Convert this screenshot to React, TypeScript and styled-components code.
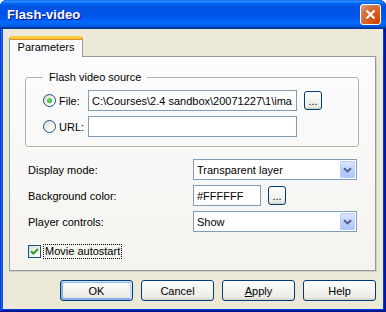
import React from 'react';
import styled, { createGlobalStyle } from 'styled-components';

const GlobalStyle = createGlobalStyle`
  html, body {
    margin: 0;
    padding: 0;
    background: #ffffff;
  }
  body {
    font-family: 'Liberation Sans', Arial, sans-serif;
    font-size: 11px;
    color: #000000;
  }
`;

const Window = styled.div`
  width: 386px;
  height: 312px;
  box-sizing: border-box;
  display: flex;
  flex-direction: column;
  border-radius: 7px 7px 0 0;
  overflow: hidden;
  background: #0054e3;
  box-shadow: inset -1px -1px #00138c, inset 1px 1px #0831d9,
    inset -2px -2px #001ea0, inset 2px 2px #166aee,
    inset -3px -3px #003bda, inset 3px 3px #0855dd;
`;

const TitleBar = styled.div`
  height: 29px;
  flex: none;
  display: flex;
  align-items: center;
  justify-content: space-between;
  padding: 0 5px 0 7px;
  background: linear-gradient(180deg, #0058ee 0%, #3593ff 4%, #288eff 6%,
    #127dff 8%, #036ffc 10%, #0262ee 14%, #0057e5 20%, #0054e3 24%,
    #0055eb 56%, #005bf5 66%, #026afe 76%, #0062ef 86%, #0052d6 92%,
    #0040ab 94%, #003092 100%);
`;

const Title = styled.span`
  font-family: 'Liberation Sans', Arial, sans-serif;
  font-weight: bold;
  font-size: 13px;
  color: #ffffff;
  text-shadow: 1px 1px #0f1089;
  letter-spacing: 0.1px;
`;

const CloseButton = styled.div`
  width: 21px;
  height: 21px;
  box-sizing: border-box;
  border: 1px solid #ffffff;
  border-radius: 3px;
  background: radial-gradient(circle at 90% 90%, #cc4600 0%, #dc6527 55%, #cd7546 68%, #e5a08a 100%);
  display: flex;
  align-items: center;
  justify-content: center;
  margin-top: -1px;
`;

const Body = styled.div`
  flex: 1;
  margin: 0 3px 3px;
  background: #ece9d8;
  display: flex;
  flex-direction: column;
  padding: 7px 7px 8px 6px;
`;

const TabStrip = styled.div`
  display: flex;
  height: 20px;
  position: relative;
  z-index: 1;
`;

const Tab = styled.div<{ $active?: boolean }>`
  width: 74px;
  height: 21px;
  box-sizing: border-box;
  border: 1px solid #919b9c;
  border-top: 3px solid #ffc83c;
  border-bottom: none;
  border-radius: 3px 3px 0 0;
  background: ${p => (p.$active ? '#fcfcfe' : '#f0f0ea')};
  display: flex;
  align-items: center;
  justify-content: center;
  padding-bottom: 2px;
  box-shadow: inset 0 1px #e68b2c;
`;

const Panel = styled.div`
  flex: 1;
  border: 1px solid #919b9c;
  box-shadow: 1px 1px #d0cebf;
  background: linear-gradient(180deg, #fcfcfe, #f4f3ee);
  padding: 14px 16px 0 15px;
  display: flex;
  flex-direction: column;
`;

const GroupBox = styled.fieldset`
  margin: 0;
  border: 1px solid #b5b2a6;
  border-radius: 3px;
  padding: 6px 0 9px 17px;
  display: flex;
  flex-direction: column;
  gap: 5px;
`;

const Legend = styled.legend`
  padding: 0 6px;
  line-height: 13px;
`;

const SourceRow = styled.div`
  display: flex;
  align-items: center;
  height: 21px;
`;

const RadioLabel = styled.label`
  width: 45px;
  flex: none;
  display: flex;
  align-items: center;
  gap: 3px;
`;

const Radio = styled.span<{ $checked?: boolean }>`
  width: 13px;
  height: 13px;
  box-sizing: border-box;
  border-radius: 50%;
  border: 1px solid #1c5180;
  background: linear-gradient(135deg, #dcd9d0 0%, #ffffff 80%);
  display: flex;
  align-items: center;
  justify-content: center;
  &::after {
    content: '';
    display: ${p => (p.$checked ? 'block' : 'none')};
    width: 5px;
    height: 5px;
    border-radius: 50%;
    background: radial-gradient(circle at 35% 35%, #6fe06a, #21a121);
  }
`;

const TextBox = styled.div<{ $width: number }>`
  width: ${p => p.$width}px;
  height: 21px;
  box-sizing: border-box;
  border: 1px solid #7f9db9;
  background: #ffffff;
  padding: 0 3px;
  display: flex;
  align-items: center;
  white-space: nowrap;
  overflow: hidden;
  flex: none;
`;

const BrowseButton = styled.div`
  width: 18px;
  height: 19px;
  box-sizing: border-box;
  margin-left: 7px;
  border: 1px solid #003c74;
  border-radius: 3px;
  background: linear-gradient(180deg, #ffffff, #ecebe6 86%, #d6d0c5);
  display: flex;
  align-items: flex-end;
  justify-content: center;
  padding-bottom: 3px;
  line-height: 9px;
  flex: none;
`;

const FieldList = styled.div`
  margin-top: 12px;
  padding-left: 3px;
  display: flex;
  flex-direction: column;
  gap: 5px;
`;

const FieldRow = styled.div`
  display: flex;
  align-items: center;
  height: 21px;
`;

const FieldLabel = styled.span`
  width: 165px;
  flex: none;
`;

const Select = styled.div`
  width: 164px;
  height: 21px;
  box-sizing: border-box;
  border: 1px solid #7f9db9;
  background: #ffffff;
  display: flex;
  align-items: center;
  justify-content: space-between;
  padding: 1px 1px 1px 3px;
`;

const DropArrow = styled.div`
  width: 15px;
  height: 17px;
  box-sizing: border-box;
  border: 1px solid #b9cdf8;
  border-radius: 1px;
  background: linear-gradient(180deg, #dbe6fe, #b9cefc 60%, #aec5fb);
  display: flex;
  align-items: center;
  justify-content: center;
`;

const CheckRow = styled.div`
  margin: 12px 0 0 3px;
  display: flex;
  align-items: center;
  gap: 2px;
`;

const CheckBox = styled.span`
  width: 13px;
  height: 13px;
  box-sizing: border-box;
  border: 1px solid #1c5180;
  background: linear-gradient(135deg, #dcdcd7, #ffffff);
  display: flex;
  align-items: center;
  justify-content: center;
`;

const FocusLabel = styled.span`
  border: 1px dotted #000000;
  padding: 0 1px;
  line-height: 13px;
`;

const ButtonRow = styled.div`
  margin-top: 9px;
  display: flex;
  justify-content: flex-end;
  gap: 8px;
`;

const Button = styled.div<{ $default?: boolean }>`
  width: 73px;
  height: 21px;
  box-sizing: border-box;
  border: 1px solid #003c74;
  border-radius: 3px;
  background: linear-gradient(180deg, #ffffff, #ecebe6 86%, #d6d0c5);
  display: flex;
  align-items: center;
  justify-content: center;
  box-shadow: ${p =>
    p.$default
      ? 'inset -1px 1px #cee7ff, inset 1px 2px #98b8ea, inset -2px 2px #bcd4f6, inset 1px -1px #89ade4, inset 2px -2px #89ade4'
      : 'none'};
`;

const Chevron = () => (
  <svg width="9" height="6" viewBox="0 0 9 6">
    <path d="M1 1.2 L4.5 4.5 L8 1.2" fill="none" stroke="#4d6185" strokeWidth="2" />
  </svg>
);

const App: React.FC = () => {
  return (
    <>
      <GlobalStyle />
      <Window>
        <TitleBar>
          <Title>Flash-video</Title>
          <CloseButton>
            <svg width="11" height="11" viewBox="0 0 11 11">
              <path d="M1.5 1.5 L9.5 9.5 M9.5 1.5 L1.5 9.5" stroke="#ffffff" strokeWidth="2.2" />
            </svg>
          </CloseButton>
        </TitleBar>
        <Body>
          <TabStrip>
            <Tab $active>Parameters</Tab>
          </TabStrip>
          <Panel>
            <GroupBox>
              <Legend>Flash video source</Legend>
              <SourceRow>
                <RadioLabel>
                  <Radio $checked />
                  File:
                </RadioLabel>
                <TextBox $width={209}>C:\Courses\2.4 sandbox\20071227\1\ima</TextBox>
                <BrowseButton>...</BrowseButton>
              </SourceRow>
              <SourceRow>
                <RadioLabel>
                  <Radio />
                  URL:
                </RadioLabel>
                <TextBox $width={209} />
              </SourceRow>
            </GroupBox>
            <FieldList>
              <FieldRow>
                <FieldLabel>Display mode:</FieldLabel>
                <Select>
                  Transparent layer
                  <DropArrow><Chevron /></DropArrow>
                </Select>
              </FieldRow>
              <FieldRow>
                <FieldLabel>Background color:</FieldLabel>
                <TextBox $width={68}>#FFFFFF</TextBox>
                <BrowseButton>...</BrowseButton>
              </FieldRow>
              <FieldRow>
                <FieldLabel>Player controls:</FieldLabel>
                <Select>
                  Show
                  <DropArrow><Chevron /></DropArrow>
                </Select>
              </FieldRow>
            </FieldList>
            <CheckRow>
              <CheckBox>
                <svg width="9" height="9" viewBox="0 0 9 9">
                  <path d="M1 4.2 L3.4 6.6 L8 2" fill="none" stroke="#21a121" strokeWidth="2" />
                </svg>
              </CheckBox>
              <FocusLabel>Movie autostart</FocusLabel>
            </CheckRow>
          </Panel>
          <ButtonRow>
            <Button $default>OK</Button>
            <Button>Cancel</Button>
            <Button><span><u>A</u>pply</span></Button>
            <Button>Help</Button>
          </ButtonRow>
        </Body>
      </Window>
    </>
  );
};

export default App;
